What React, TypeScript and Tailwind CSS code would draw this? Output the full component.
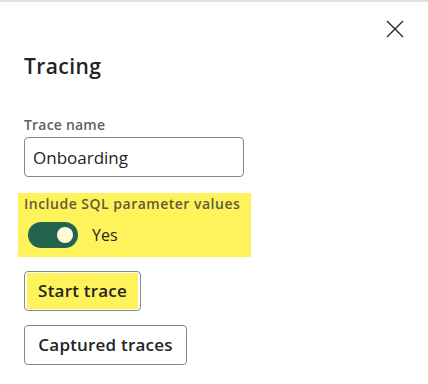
import React, { useState } from 'react';

const App: React.FC = () => {
  const [name, setName] = useState('Onboarding');
  const [includeSql, setIncludeSql] = useState(true);

  return (
    <div
      className="w-[428px] h-[384px] bg-white border-t-2 border-[#e1e1e1] overflow-hidden text-[#242424]"
      style={{ fontFamily: '"Open Sans", "Noto Sans", sans-serif' }}
    >
      {/* Close */}
      <div className="flex justify-end pt-[18px] pr-[24px]">
        <button aria-label="Close" className="w-[18px] h-[18px] text-[#242424]">
          <svg viewBox="0 0 18 18" className="w-[18px] h-[18px]" fill="none" stroke="currentColor" strokeWidth={1.3}>
            <path d="M1 1L17 17M17 1L1 17" />
          </svg>
        </button>
      </div>

      <div className="pl-[24px]">
        <h2 className="mt-[14px] text-[21px] leading-[28px] font-semibold tracking-[0.4px]">Tracing</h2>

        {/* Trace name */}
        <label className="block mt-[36px] text-[14px] leading-[18px] font-semibold tracking-[0.2px] text-[#616161]">
          Trace name
        </label>
        <input
          value={name}
          onChange={e => setName(e.target.value)}
          className="mt-[3px] block w-[220px] h-[40px] px-[8px] rounded-[4px] border border-[#8a8886] text-[17px] text-[#242424] outline-none"
          style={{ fontFamily: 'inherit' }}
        />

        {/* SQL parameter values */}
        <div className="mt-[16px] -ml-[6px] w-[233px] h-[64px] bg-[#fff35c] pl-[6px] pt-[2px]">
          <div className="text-[14px] leading-[18px] font-semibold tracking-[0.5px] text-[#5f5b3a]">
            Include SQL parameter values
          </div>
          <div className="mt-[9px] flex items-center">
            <button
              onClick={() => setIncludeSql(v => !v)}
              className={`ml-[4px] w-[50px] h-[26px] rounded-full flex items-center ${includeSql ? 'bg-[#236450] justify-end' : 'bg-white border border-[#616161] justify-start'}`}
            >
              <span className="mx-[5px] w-[16px] h-[16px] rounded-full bg-[#fffbd6]" />
            </button>
            <span className="ml-[14px] text-[16px] text-[#242424]">{includeSql ? 'Yes' : 'No'}</span>
          </div>
        </div>

        {/* Actions */}
        <div className="mt-[14px] flex flex-col items-start gap-[14px]">
          <button className="h-[40px] w-[117px] rounded-[4px] border border-[#8a8886] bg-white px-[2px] py-[1px]">
            <span className="flex h-full items-center justify-center bg-[#fff35c] text-[17px] font-semibold tracking-[0.2px] text-[#242424]">
              Start trace
            </span>
          </button>
          <button className="h-[40px] w-[163px] rounded-[4px] border border-[#8a8886] bg-white text-[17px] font-semibold tracking-[0.2px] text-[#242424]">
            Captured traces
          </button>
        </div>
      </div>
    </div>
  );
};

export default App;
